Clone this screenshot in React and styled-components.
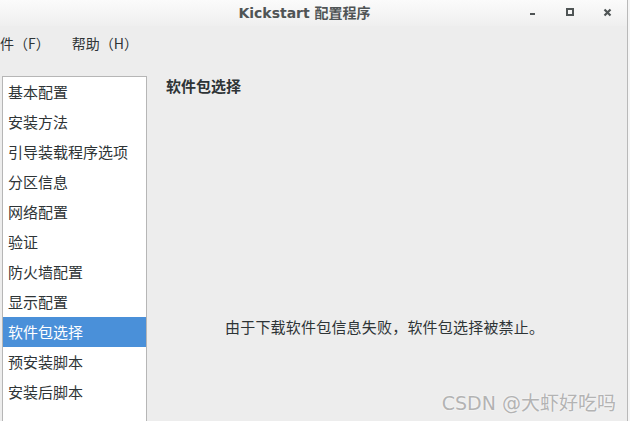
import React from 'react';
import styled, { createGlobalStyle } from 'styled-components';

const GlobalStyle = createGlobalStyle`
  html, body {
    margin: 0;
    padding: 0;
    background: #f6f6f6;
    overflow: hidden;
  }
  body {
    font-family: "Noto Sans CJK SC", "DejaVu Sans", sans-serif;
    color: #2e3436;
  }
`;

const items = [
  '基本配置',
  '安装方法',
  '引导装载程序选项',
  '分区信息',
  '网络配置',
  '验证',
  '防火墙配置',
  '显示配置',
  '软件包选择',
  '预安装脚本',
  '安装后脚本',
];

const App = () => (
  <>
    <GlobalStyle />
    <Window>
      <TitleBar>
        <Title>Kickstart 配置程序</Title>
        <Controls>
          <CtrlButton aria-label="minimize">
            <svg width="8" height="8" viewBox="0 0 8 8">
              <rect x="1" y="5" width="5" height="2" fill="#4f5455" />
            </svg>
          </CtrlButton>
          <CtrlButton aria-label="maximize">
            <svg width="8" height="8" viewBox="0 0 8 8">
              <rect x="1" y="1" width="6" height="6" fill="none" stroke="#4f5455" strokeWidth="2" />
            </svg>
          </CtrlButton>
          <CtrlButton aria-label="close">
            <svg width="9" height="9" viewBox="0 0 9 9">
              <path d="M1.5 1.5 L7.5 7.5 M7.5 1.5 L1.5 7.5" stroke="#4f5455" strokeWidth="2.2" />
            </svg>
          </CtrlButton>
        </Controls>
      </TitleBar>

      <MenuBar>
        <MenuItem>文件（F）</MenuItem>
        <MenuItem>帮助（H）</MenuItem>
      </MenuBar>

      <Body>
        <SideList>
          {items.map((it) => (
            <ListItem key={it} selected={it === '软件包选择'}>{it}</ListItem>
          ))}
        </SideList>
        <Panel>
          <Heading>软件包选择</Heading>
          <Message>由于下载软件包信息失败，软件包选择被禁止。</Message>
        </Panel>
      </Body>

      <Watermark>CSDN @大虾好吃吗</Watermark>
    </Window>
  </>
);

const Window = styled.div`
  position: relative;
  width: 627px;
  height: 421px;
  background: #ededed;
  border-right: 1px solid #b9b9b9;
  display: flex;
  flex-direction: column;
  overflow: hidden;
`;

const TitleBar = styled.div`
  height: 26px;
  flex-shrink: 0;
  display: flex;
  align-items: center;
  justify-content: center;
  position: relative;
  background: linear-gradient(#fbfbfb, #efefef);
`;

const Title = styled.div`
  font-family: "DejaVu Sans", "Noto Sans CJK SC", sans-serif;
  font-weight: bold;
  font-size: 14px;
  color: #4f5455;
  margin-left: -18px;
  margin-top: -2px;
`;

const Controls = styled.div`
  position: absolute;
  right: 12px;
  top: 5px;
  display: flex;
  gap: 21px;
`;

const CtrlButton = styled.div`
  width: 16px;
  height: 14px;
  display: flex;
  align-items: center;
  justify-content: center;
`;

const MenuBar = styled.div`
  height: 34px;
  flex-shrink: 0;
  display: flex;
  align-items: center;
  gap: 22px;
  margin-left: -14px;
  padding-bottom: 1px;
`;

const MenuItem = styled.div`
  font-size: 14px;
  color: #2e3436;
`;

const Body = styled.div`
  flex: 1;
  display: flex;
  padding: 15px 0 0 2px;
  min-height: 0;
`;

const SideList = styled.div`
  width: 143px;
  flex-shrink: 0;
  background: #ffffff;
  border: 1px solid #b6b6b6;
  border-bottom: none;
  display: flex;
  flex-direction: column;
`;

const ListItem = styled.div`
  height: 30px;
  line-height: 30px;
  padding-left: 5px;
  font-size: 15px;
  white-space: nowrap;
  color: ${(p) => (p.selected ? '#ffffff' : '#2e3436')};
  background: ${(p) => (p.selected ? '#4a90d9' : 'transparent')};
`;

const Panel = styled.div`
  flex: 1;
  display: flex;
  flex-direction: column;
  padding: 2px 0 0 19px;
`;

const Heading = styled.div`
  font-size: 15px;
  font-weight: bold;
  color: #2e3436;
  height: 16px;
  line-height: 16px;
`;

const Message = styled.div`
  margin-top: 222px;
  padding-left: 59px;
  font-size: 15px;
  letter-spacing: 0.2px;
  color: #2e3436;
  white-space: nowrap;
`;

const Watermark = styled.div`
  position: absolute;
  right: 11px;
  bottom: 6px;
  font-family: "DejaVu Sans", "Noto Sans CJK SC", sans-serif;
  font-size: 19px;
  color: #b3b3b3;
  text-shadow: 0 0 2px #ffffff;
  white-space: nowrap;
`;

export default App;
